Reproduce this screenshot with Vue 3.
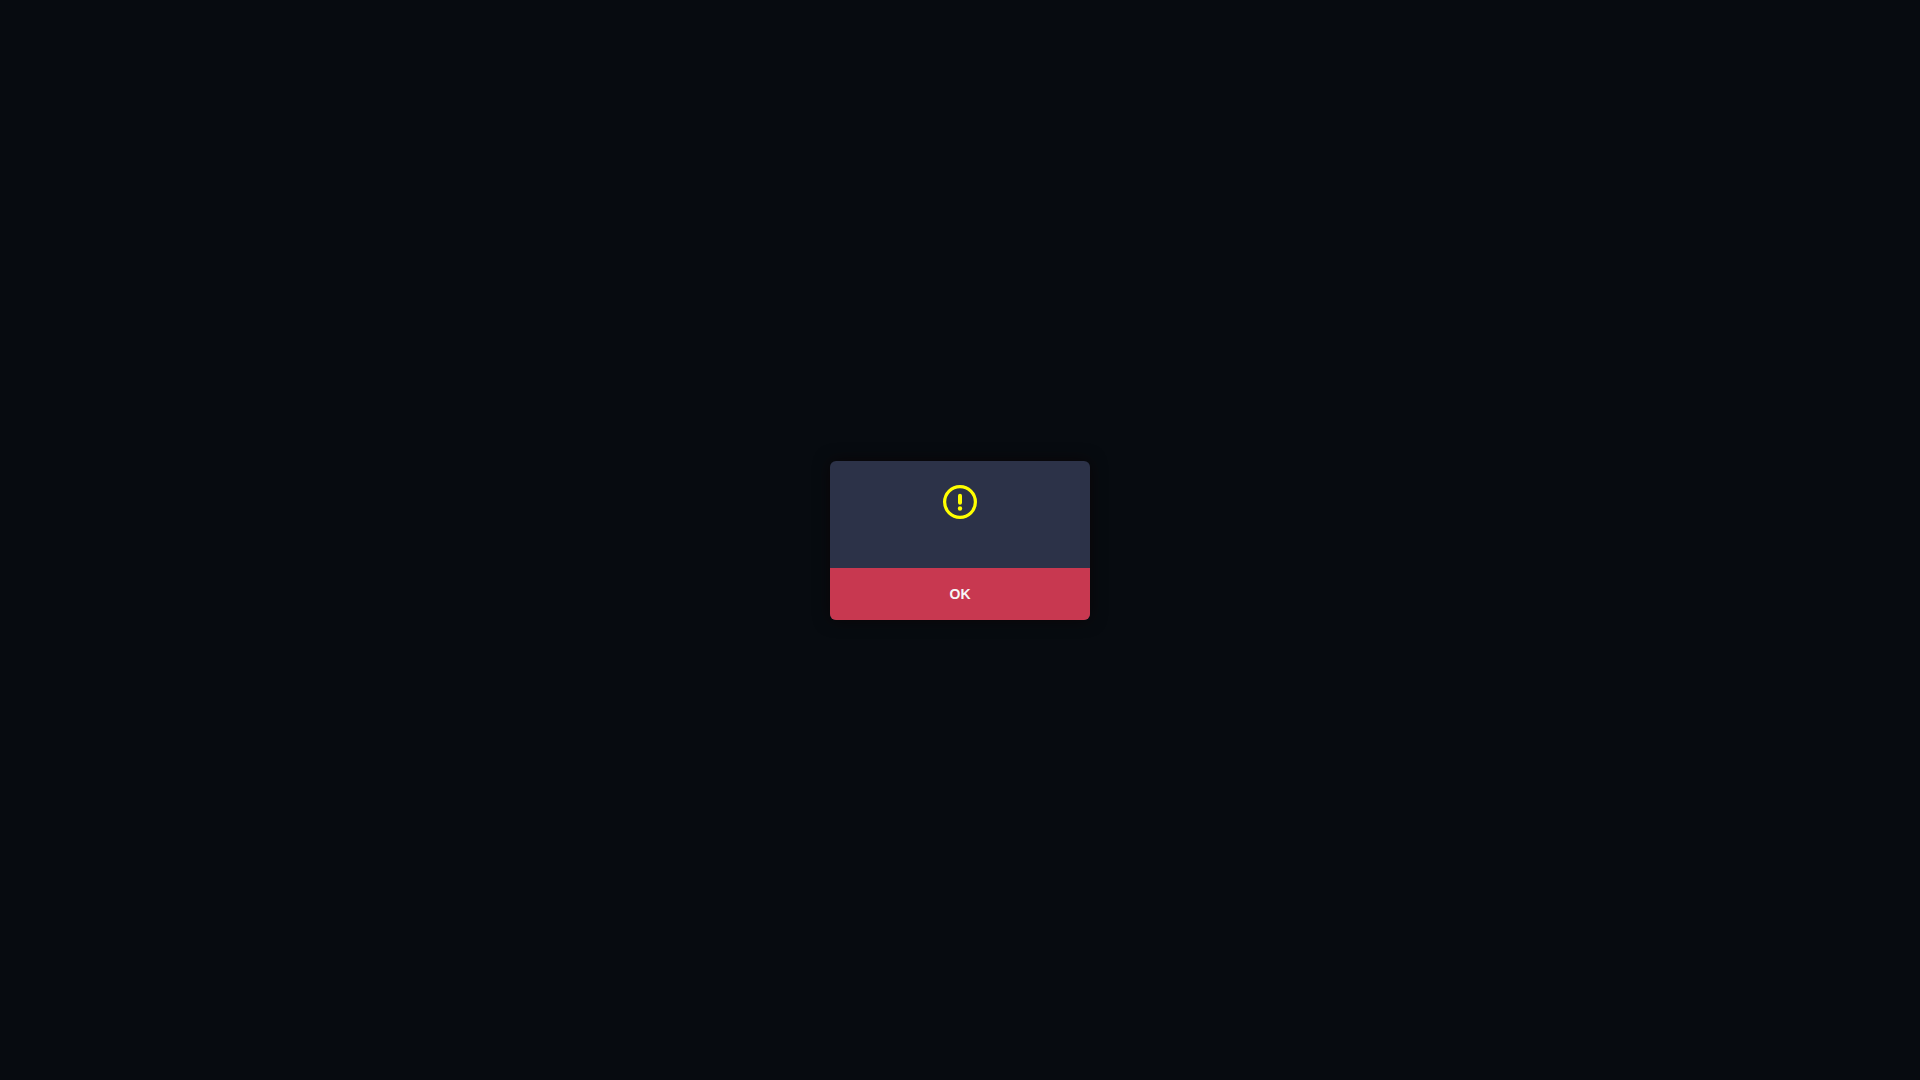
<template>
  <div class="page">
    <div class="dialog">
      <div class="dialog-body">
        <svg class="dialog-icon" viewBox="0 0 40 40" fill="none">
          <circle cx="20" cy="20" r="15.4" stroke="#ffff00" stroke-width="3.2" />
          <line x1="20" y1="13.8" x2="20" y2="20.8" stroke="#ffff00" stroke-width="4" stroke-linecap="round" />
          <circle cx="20" cy="26.5" r="2.2" fill="#ffff00" />
        </svg>
      </div>
      <button class="dialog-btn">OK</button>
    </div>
  </div>
</template>

<script setup>
</script>

<style scoped>
.page {
  width: 100%;
  height: 100vh;
  display: flex;
  align-items: center;
  justify-content: center;
  background: #070b10;
}

.dialog {
  width: 260px;
  display: flex;
  flex-direction: column;
  border-radius: 6px;
  overflow: hidden;
  background: #2c3248;
  box-shadow: 0 0 16px rgba(14, 2, 4, 0.6);
}

.dialog-body {
  height: 107px;
  padding-top: 21px;
  box-sizing: border-box;
  display: flex;
  justify-content: center;
  align-items: flex-start;
}

.dialog-icon {
  width: 40px;
  height: 40px;
}

.dialog-btn {
  height: 52px;
  border: none;
  padding: 0;
  background: #c83850;
  color: #f6f6f6;
  font-family: "Liberation Sans", Arial, sans-serif;
  font-size: 14px;
  font-weight: 700;
  cursor: pointer;
}
</style>

<style>
html,
body {
  margin: 0;
  background: #070b10;
}
</style>
